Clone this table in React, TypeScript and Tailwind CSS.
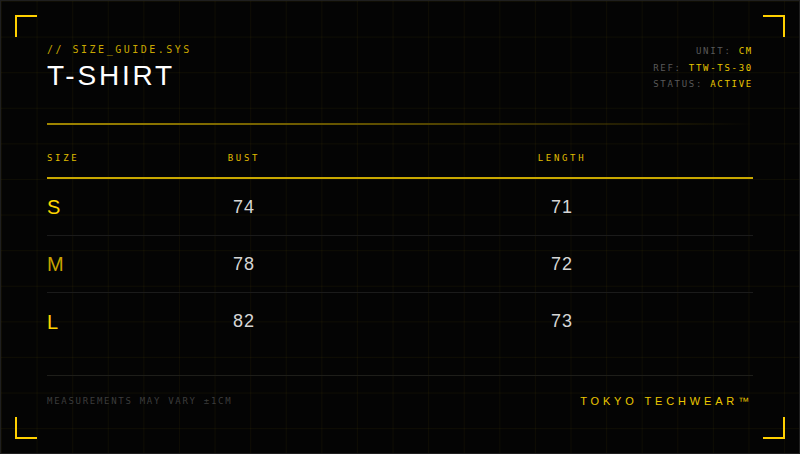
const mono = "font-['DejaVu_Sans_Mono',monospace]";
const sans = "font-['Liberation_Sans',Arial,sans-serif]";

const rows = [
  { size: "S", bust: 74, length: 71, tone: "text-[#ffd500]" },
  { size: "M", bust: 78, length: 72, tone: "text-[#c9a300]" },
  { size: "L", bust: 82, length: 73, tone: "text-[#ffd500]" },
];

const meta = [
  { label: "UNIT:", value: "CM" },
  { label: "REF:", value: "TTW-TS-30" },
  { label: "STATUS:", value: "ACTIVE" },
];

const Corner = ({ className }: { className: string }) => (
  <span className={`absolute w-[22px] h-[22px] border-[#ffd000] ${className}`} />
);

export default function App() {
  return (
    <div className="relative w-[800px] h-[454px] overflow-hidden border border-[#1f1f1f] bg-[#040404] bg-[linear-gradient(rgba(255,215,0,0.045)_1px,transparent_1px),linear-gradient(90deg,rgba(255,215,0,0.045)_1px,transparent_1px)] bg-[size:35.6px_35.6px]">
      <Corner className="top-[14px] left-[14px] border-t-2 border-l-2" />
      <Corner className="top-[14px] right-[14px] border-t-2 border-r-2" />
      <Corner className="bottom-[14px] left-[14px] border-b-2 border-l-2" />
      <Corner className="bottom-[14px] right-[14px] border-b-2 border-r-2" />

      <div className="flex flex-col px-[46px] pt-[42px]">
        {/* header */}
        <div className="flex justify-between items-start h-[50px]">
          <div className="flex flex-col">
            <div className={`${mono} text-[10px] leading-[14px] tracking-[0.25em] text-[#c9a800]`}>
              // SIZE_GUIDE.SYS
            </div>
            <h1 className={`${sans} mt-[2px] text-[28px] leading-[34px] tracking-[0.1em] text-white`}>
              T-SHIRT
            </h1>
          </div>
          <div className={`${mono} flex flex-col items-end text-[9px] leading-[16.5px] tracking-[0.19em]`}>
            {meta.map((m) => (
              <div key={m.label}>
                <span className="text-[#595959]">{m.label} </span>
                <span className="text-[#e8c600]">{m.value}</span>
              </div>
            ))}
          </div>
        </div>

        <div className="mt-[30px] h-[2px] bg-linear-to-r from-[#a08600] via-[#5a4b00] to-transparent" />

        {/* table */}
        <div className={`${mono} mt-[27px] grid grid-cols-[70px_254px_1fr] pb-[13px] border-b-2 border-[#c9a800] text-[9px] leading-[12px] tracking-[0.3em] text-[#e0bd00]`}>
          <div>SIZE</div>
          <div className="text-center">BUST</div>
          <div className="text-center">LENGTH</div>
        </div>
        {rows.map((r, i) => (
          <div
            key={r.size}
            className={`grid grid-cols-[70px_254px_1fr] items-center h-[57px] ${i < rows.length - 1 ? "border-b border-[#1b1b1b]" : ""}`}
          >
            <div className={`${sans} text-[20px] ${r.tone}`}>{r.size}</div>
            <div className={`${sans} text-center text-[18px] tracking-[0.05em] text-[#d6d6d6]`}>{r.bust}</div>
            <div className={`${sans} text-center text-[18px] tracking-[0.05em] text-[#d6d6d6]`}>{r.length}</div>
          </div>
        ))}

        {/* footer */}
        <div className="mt-[25px] h-px bg-[#1e1e1a]" />
        <div className="mt-[19px] flex justify-between items-center">
          <div className={`${mono} text-[9px] leading-[12px] tracking-[0.19em] text-[#3c3c3c]`}>
            MEASUREMENTS MAY VARY ±1CM
          </div>
          <div className={`${sans} text-[11px] leading-[12px] tracking-[0.35em] text-[#ebc600]`}>
            TOKYO TECHWEAR™
          </div>
        </div>
      </div>
    </div>
  );
}
